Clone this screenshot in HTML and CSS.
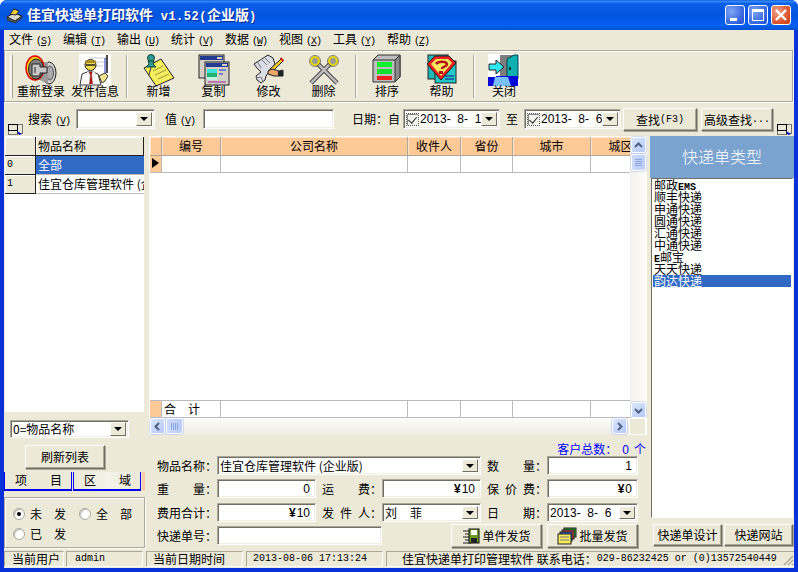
FILE: index.html
```html
<!DOCTYPE html>
<html lang="zh">
<head>
<meta charset="utf-8">
<title>佳宜快递单打印软件</title>
<link rel="stylesheet" href="styles.css">
</head>
<body>
<div class="window">
  <div class="titlebar">
    <svg class="appicon" width="18" height="18" viewBox="0 0 18 18"><path d="M1 11l7-4 8 3-7 5z" fill="#d8d8c8" stroke="#222"/><path d="M4 8l4-5 5 2-3 4z" fill="#f4d13a" stroke="#222"/><path d="M1 11v3l8 3 7-5v-2l-7 5z" fill="#555" stroke="#222" stroke-width=".6"/></svg>
    <div class="title">佳宜快递单打印软件<span class="tm"> v1.52(</span>企业版<span class="tm">)</span></div>
    <div class="winbtns">
      <div class="winbtn"><svg width="20" height="20" viewBox="0 0 20 20"><rect x="5" y="13" width="7" height="3" fill="#fff"/></svg></div>
      <div class="winbtn"><svg width="20" height="20" viewBox="0 0 20 20"><rect x="4.5" y="5.5" width="11" height="10" fill="none" stroke="#fff"/><rect x="4" y="4" width="12" height="3" fill="#fff"/></svg></div>
      <div class="winbtn close"><svg width="20" height="20" viewBox="0 0 20 20"><path d="M5 5l10 10M15 5L5 15" stroke="#fff" stroke-width="2.4"/></svg></div>
    </div>
  </div>
  <div class="frame">
    <div class="menubar">
      <div class="menu">文件<span class="key">(<u>S</u>)</span></div>
      <div class="menu">编辑<span class="key">(<u>T</u>)</span></div>
      <div class="menu">输出<span class="key">(<u>U</u>)</span></div>
      <div class="menu">统计<span class="key">(<u>V</u>)</span></div>
      <div class="menu">数据<span class="key">(<u>W</u>)</span></div>
      <div class="menu">视图<span class="key">(<u>X</u>)</span></div>
      <div class="menu">工具<span class="key">(<u>Y</u>)</span></div>
      <div class="menu">帮助<span class="key">(<u>Z</u>)</span></div>
    </div>
    <div class="toolbar">
      <div class="grip"></div>
      <div class="tool">
        <svg width="32" height="32" viewBox="0 0 32 32"><ellipse cx="24" cy="19" rx="7" ry="11" fill="#d0d0d0" stroke="#222"/><ellipse cx="25" cy="19" rx="3.500" ry="7" fill="#aaa" stroke="#555"/><path d="M11 8l12 0v22L11 24z" fill="#9a9a9a"/><ellipse cx="10" cy="14" rx="9" ry="12" fill="#ffcf00" stroke="#e00000" stroke-width="1.500"/><ellipse cx="11" cy="15" rx="7.500" ry="10" fill="#808080" stroke="#222"/><path d="M7 10h8v3h7v6h-7v3H7z" fill="#c8c8c8" stroke="#222"/><path d="M10 13v6" stroke="#222"/></svg>
        <span>重新登录</span>
      </div>
      <div class="tool">
        <svg width="32" height="32" viewBox="0 0 32 32"><rect width="32" height="32" fill="#fff"/><path d="M11 4h16M13 8h12M15 12h9" stroke="#c8c8c8"/><path d="M28 1v18" stroke="#000" stroke-width="1.4"/><path d="M26 4v16" stroke="#2030c0"/><path d="M1 31l2-11 5-2h6l5 2 3 11z" fill="#fff" stroke="#333"/><path d="M8 18l3 13h2l3-13z" fill="#eee"/><path d="M10 18h3l-.5 3 1 9h-3l1-9z" fill="#c01818" stroke="#600" stroke-width=".4"/><circle cx="11.500" cy="11" r="5.500" fill="#f0dc50" stroke="#222"/><path d="M6 6.500h11V9H6z" fill="#a88a20"/><path d="M7 11h9" stroke="#222" stroke-width="1.400"/><path d="M20 22l6-3 3 3-3 5-3 2z" fill="#f5e58a" stroke="#333"/></svg>
        <span>发件信息</span>
      </div>
      <div class="sep s1"></div>
      <div class="tool w55">
        <svg width="32" height="32" viewBox="0 0 32 32"><path d="M1 14L18 5l13 19-18 8z" fill="#f6ee60" stroke="#222"/><path d="M10 17l10-5M12 21l11-5M15 25l11-5" stroke="#9a9a30"/><path d="M6 21l2-8" stroke="#333"/><circle cx="8" cy="4" r="3.500" fill="#2f9a96" stroke="#143"/><path d="M5 7h6l-1 3 3 3H3l3-3z" fill="#2f9a96" stroke="#143"/></svg>
        <span>新增</span>
      </div>
      <div class="tool w55">
        <svg width="32" height="32" viewBox="0 0 32 32"><rect x="1" y="1" width="25" height="23" fill="#d4d0c8" stroke="#222"/><rect x="2" y="2" width="23" height="4" fill="#223a90"/><rect x="19" y="3" width="5" height="2" fill="#d4d0c8"/><rect x="7" y="8" width="24" height="23" fill="#d4d0c8" stroke="#222"/><rect x="8" y="9" width="22" height="4" fill="#223a90"/><rect x="24" y="10" width="5" height="2" fill="#d4d0c8"/><rect x="9" y="15" width="10" height="4" fill="#40e0d8"/><rect x="9" y="19" width="10" height="4" fill="#20b070"/><rect x="9" y="23" width="10" height="3" fill="#c0f0e0"/><path d="M21 16h7M21 20h4" stroke="#1030c0"/><path d="M10 28h18" stroke="#a020a0"/></svg>
        <span>复制</span>
      </div>
      <div class="tool w55">
        <svg width="32" height="32" viewBox="0 0 32 32"><path d="M1 10L15 1l5 3 2 6-9 12-1 4-4 3-4-3-1-4 5-4-4-4z" fill="#dcdce6" stroke="#222"/><path d="M4 7l4 7M3 24l5-1 2 5M8 5l6 6M11 3l6 6" fill="none" stroke="#777"/><path d="M28 5L17 15l-1 4 4-2L30 7z" fill="#f2c820" stroke="#222"/><path d="M27.500 4l3 3" stroke="#d02020" stroke-width="2"/><path d="M15 17l4-2 7 2 4-1v6h-9l-6-2z" fill="#e8a868" stroke="#222"/><path d="M25 17h5v5h-5z" fill="#222"/></svg>
        <span>修改</span>
      </div>
      <div class="tool w55">
        <svg width="32" height="32" viewBox="0 0 32 32"><path d="M9 9l20 20M23 9L3 29" stroke="#333" stroke-width="4.500"/><path d="M9 9l20 20M23 9L3 29" stroke="#bcbcbc" stroke-width="2.500"/><circle cx="7" cy="7" r="4" fill="#999" stroke="#e8d800" stroke-width="2.200"/><circle cx="25" cy="7" r="4" fill="#999" stroke="#e8d800" stroke-width="2.200"/><circle cx="7" cy="7" r="5.500" fill="none" stroke="#333" stroke-width=".6"/><circle cx="25" cy="7" r="5.500" fill="none" stroke="#333" stroke-width=".6"/></svg>
        <span>删除</span>
      </div>
      <div class="sep s2"></div>
      <div class="tool">
        <svg width="32" height="32" viewBox="0 0 32 32"><path d="M2 6l5-5h22v22l-5 5H2z" fill="#bdbdbd" stroke="#333"/><path d="M24 6l5-5v22l-5 5z" fill="#8a8a8a" stroke="#333"/><path d="M2 6h22" stroke="#333"/><rect x="6" y="8" width="15" height="5" fill="#10f030"/><rect x="6" y="15" width="15" height="5" fill="#10e030"/><rect x="6" y="22" width="15" height="4" fill="#f02020"/></svg>
        <span>排序</span>
      </div>
      <div class="tool w55">
        <svg width="32" height="32" viewBox="0 0 32 32"><rect x="2" y="1" width="20" height="24" fill="#22b8b8" stroke="#222"/><rect x="9" y="7" width="21" height="22" fill="#22c8c8" stroke="#222"/><path d="M19 22h9M19 25h9" stroke="#118"/><path d="M9 2h14l7 7-15 17L1 10z" fill="#e82020" stroke="#222"/><path d="M10 5h12l4 4-11 13L5 10z" fill="#f8e860"/><path d="M10 10c2-3 10-3 11 0 0 3-5 2-5 5" fill="none" stroke="#b01010" stroke-width="2.400"/><rect x="13" y="17" width="4" height="3" fill="#b01010"/></svg>
        <span>帮助</span>
      </div>
      <div class="sep s3"></div>
      <div class="tool">
        <svg width="32" height="32" viewBox="0 0 32 32"><rect width="32" height="32" fill="#fff"/><rect x="12" y="1" width="17" height="24" fill="#7e7e7e"/><path d="M19 24V5l7-4h4v24z" fill="#10b0b0" stroke="#044"/><rect x="21" y="13" width="2" height="3" fill="#033"/><path d="M0 23h8v-1h22v10H0z" fill="#0808d8"/><path d="M7 23h13l3 9H5z" fill="#7ac0f8"/><path d="M1 10h7V6l8 7-8 7v-4H1z" fill="#30e8f0" stroke="#222"/></svg>
        <span>关闭</span>
      </div>
    </div>
    <div class="searchrow">
      <svg class="handle" width="15" height="11" viewBox="0 0 15 11"><rect x=".5" y=".5" width="9" height="6" fill="none" stroke="#000"/><rect x="9.500" y=".5" width="5" height="9" fill="none" stroke="#000" stroke-dasharray="1 1"/><rect x=".5" y="6.500" width="9" height="4" fill="none" stroke="#000" stroke-dasharray="1 1"/><path d="M9 7l5 3-3 1z" fill="#00c"/></svg>
      <div class="lbl slbl">搜索<span class="key">(<u>V</u>)</span></div>
      <div class="combo searchcombo"><div class="val"></div><div class="drop"></div></div>
      <div class="lbl vlbl">值<span class="key">(<u>V</u>)</span></div>
      <div class="field valuefield"></div>
      <div class="lbl dlbl">日期：自</div>
      <div class="combo datecombo"><div class="check"></div><div class="dateval">2013-  8-  1</div><div class="drop"></div></div>
      <div class="lbl tolbl">至</div>
      <div class="combo datecombo"><div class="check"></div><div class="dateval">2013-  8-  6</div><div class="drop"></div></div>
      <div class="btn findbtn">查找<span class="m">(F3)</span></div>
      <div class="btn advbtn">高级查找<span class="m">...</span></div>
      <svg class="handle h2" width="15" height="11" viewBox="0 0 15 11"><rect x=".5" y=".5" width="9" height="6" fill="none" stroke="#000"/><rect x="9.500" y=".5" width="5" height="9" fill="none" stroke="#000" stroke-dasharray="1 1"/><rect x=".5" y="6.500" width="9" height="4" fill="none" stroke="#000" stroke-dasharray="1 1"/><path d="M9 7l5 3-3 1z" fill="#00c"/></svg>
    </div>
    <div class="main">
      <div class="leftcol">
        <div class="lgrid">
          <div class="lrow lhead"><div class="fixed"></div><div class="lcell hcell">物品名称</div></div>
          <div class="lrow"><div class="fixed">0</div><div class="lcell sel">全部</div></div>
          <div class="lrow"><div class="fixed">1</div><div class="lcell">佳宜仓库管理软件 (企业版)</div></div>
        </div>
        <div class="combo fieldcombo"><div class="val">0=物品名称</div><div class="drop"></div></div>
        <div class="btn refresh">刷新列表</div>
        <div class="tabs">
          <div class="tab"><span>项</span><span>目</span></div>
          <div class="tab tab2"><span>区</span><span>域</span></div>
          <div class="tabedge"></div>
        </div>
        <div class="radios">
          <div class="radio"><i class="dot on"></i><span>未发</span></div>
          <div class="radio"><i class="dot"></i><span>全部</span></div>
          <div class="radio"><i class="dot"></i><span>已发</span></div>
        </div>
      </div>
      <div class="centercol">
        <div class="gridbox">
          <div class="gridmain">
            <div class="table">
              <div class="trow thead"><div></div><div>编号</div><div>公司名称</div><div>收件人</div><div>省份</div><div>城市</div><div>城区</div></div>
              <div class="trow tbody"><div class="ind"><i></i></div><div></div><div></div><div></div><div></div><div></div><div></div></div>
              <div class="tspace"></div>
              <div class="trow tfoot"><div class="ind"></div><div class="sum"><span>合</span><span>计</span></div><div></div><div></div><div></div><div></div><div></div></div>
            </div>
            <div class="vscroll">
              <div class="sbtn"><svg width="15" height="15" viewBox="0 0 15 15"><path d="M4 9l3.500-3.500L11 9" fill="none" stroke="#4d6185" stroke-width="2"/></svg></div>
              <div class="sthumb"><svg width="9" height="8" viewBox="0 0 9 8"><path d="M1 .5h7M1 2.500h7M1 4.500h7M1 6.500h7" stroke="#8aa4e0"/></svg></div>
              <div class="sfill"></div>
              <div class="sbtn"><svg width="15" height="15" viewBox="0 0 15 15"><path d="M4 6l3.500 3.500L11 6" fill="none" stroke="#4d6185" stroke-width="2"/></svg></div>
            </div>
          </div>
          <div class="hscroll">
            <div class="sbtn"><svg width="15" height="15" viewBox="0 0 15 15"><path d="M9 4L5.500 7.500 9 11" fill="none" stroke="#4d6185" stroke-width="2"/></svg></div>
            <div class="sthumb"><svg width="8" height="9" viewBox="0 0 8 9"><path d="M.5 1v7M2.500 1v7M4.500 1v7M6.500 1v7" stroke="#8aa4e0"/></svg></div>
            <div class="sfill"></div>
            <div class="sbtn"><svg width="15" height="15" viewBox="0 0 15 15"><path d="M6 4l3.500 3.500L6 11" fill="none" stroke="#4d6185" stroke-width="2"/></svg></div>
            <div class="corner"></div>
          </div>
        </div>
        <div class="summary">客户总数：<span class="count">0</span>个</div>
        <div class="form">
          <div class="flabel">物品名称：</div>
          <div class="combo span3"><div class="val">佳宜仓库管理软件 (企业版)</div><div class="drop"></div></div>
          <div class="flabel lab2"><span class="w2">数</span>量：</div>
          <div class="field num">1</div>

          <div class="flabel"><span class="w2">重</span>量：</div>
          <div class="field num">0</div>
          <div class="flabel lab2"><span class="w2">运</span>费：</div>
          <div class="field num"><b>¥</b>10</div>
          <div class="flabel lab2"><span class="w1">保</span><span class="w1">价</span>费：</div>
          <div class="field num"><b>¥</b>0</div>

          <div class="flabel">费用合计：</div>
          <div class="field num"><b>¥</b>10</div>
          <div class="flabel lab2"><span class="w1">发</span><span class="w1">件</span>人：</div>
          <div class="combo"><div class="val"><span class="w25">刘</span>菲</div><div class="drop"></div></div>
          <div class="flabel lab2"><span class="w2">日</span>期：</div>
          <div class="combo"><div class="dateval">2013-  8-  6</div><div class="drop"></div></div>

          <div class="flabel">快递单号：</div>
          <div class="field span2"></div>
          <div class="sendbtns">
            <div class="btn send">
              <svg width="18" height="18" viewBox="0 0 18 18"><path d="M1 4h6M3 7h5M1 10h6M3 13h5M1 16h8" stroke="#222"/><rect x="7" y="2" width="10" height="14" fill="#6a9a20" stroke="#111"/><rect x="9" y="3" width="6" height="5" fill="#fff"/><rect x="9" y="11" width="6" height="5" fill="#222"/></svg>
              <span>单件发货</span>
            </div>
            <div class="btn send">
              <svg width="20" height="18" viewBox="0 0 20 18"><rect x="7" y="1" width="12" height="9" fill="#20a030" stroke="#222"/><rect x="5" y="3" width="12" height="9" fill="#d04040" stroke="#222"/><rect x="3" y="5" width="12" height="9" fill="#3060d0" stroke="#222"/><rect x="1" y="7" width="13" height="10" fill="#f4ec60" stroke="#222"/><path d="M3 10h9M3 13h9" stroke="#777"/></svg>
              <span>批量发货</span>
            </div>
          </div>
        </div>
      </div>
      <div class="rightcol">
        <div class="rhead">快递单类型</div>
        <div class="rlist">
          <div>邮政<span class="m b">EMS</span></div>
          <div>顺丰快递</div>
          <div>申通快递</div>
          <div>圆通快递</div>
          <div>汇通快递</div>
          <div>中通快递</div>
          <div><span class="m b">E</span>邮宝</div>
          <div>天天快递</div>
          <div class="rsel">韵达快递</div>
        </div>
        <div class="ractions">
          <div class="btn rbtn">快递单设计</div>
          <div class="btn rbtn">快递网站</div>
        </div>
      </div>
    </div>
    <div class="status">
      <div class="scell c1">当前用户</div>
      <div class="scell c2"><span class="m">admin</span></div>
      <div class="scell c3">当前日期时间</div>
      <div class="scell c4"><span class="m">2013-08-06 17:13:24</span></div>
      <div class="scell c5">佳宜快递单打印管理软件 联系电话：<span class="m">029-86232425 or (0)13572540449</span>
        <svg class="sizegrip" width="12" height="12" viewBox="0 0 12 12"><path d="M11 2L2 11M11 6l-5 5M11 10l-1 1" stroke="#aca899" stroke-width="1.300"/></svg>
      </div>
    </div>
  </div>
</div>
</body>
</html>
```
FILE: styles.css
```css
* { box-sizing: border-box; }
html, body { margin: 0; padding: 0; }
body {
  width: 798px; height: 572px; overflow: hidden;
  font-family: "Noto Sans CJK SC", "Liberation Sans", sans-serif;
  font-size: 12px; line-height: 16px; color: #000;
}
.window {
  width: 798px; height: 572px; display: flex; flex-direction: column;
  background: #0831d9;
  border-radius: 7px 7px 0 0; overflow: hidden;
}
.m { font-family: "Liberation Mono", monospace; font-size: 10px; }
.b { font-weight: bold; }
.titlebar {
  height: 30px; flex: none; display: flex; align-items: center;
  padding: 0 7px 0 6px;
  background: linear-gradient(180deg, #0a5ae0 0, #3c8cf8 4%, #0a5fe8 12%, #0454e0 50%, #0660f0 85%, #0350d0 100%);
}
.appicon { flex: none; }
.title {
  margin-left: 3px; font-size: 14px; font-weight: bold; color: #fff;
  white-space: pre; text-shadow: 1px 1px 0 #0a2a90; flex: 1; line-height: 18px;
}
.tm { font-family: "Liberation Mono", monospace; font-size: 12px; letter-spacing: .5px; }
.winbtns { display: flex; gap: 3px; }
.winbtn {
  width: 20px; height: 20px; border: 1px solid #fff; border-radius: 3px;
  background: radial-gradient(circle at 30% 30%, #7ea6f4, #2a5bdc 80%);
  display: flex; overflow: hidden;
}
.winbtn svg { flex: none; margin: -1px; }
.close { background: radial-gradient(circle at 30% 30%, #f0a088, #d6481e 75%); }
.frame {
  flex: 1; margin: 0 4px 4px; background: #ece9d8;
  display: flex; flex-direction: column; min-height: 0;
}
.menubar { height: 20px; flex: none; display: flex; padding-left: 5px; align-items: center; }
.menu { width: 54px; white-space: nowrap; }
.key { font-family: "Liberation Mono", monospace; font-size: 10px; margin-left: 3px; letter-spacing: -1px; }
.key u { text-underline-offset: 1px; }
.toolbar {
  height: 52px; flex: none; width: 789px; display: flex; align-items: stretch;
  border: 1px solid #aca899; box-shadow: inset 1px 1px 0 #fff, 1px 1px 0 #fff;
  padding: 3px 0 0 5px;
}
.grip { width: 3px; margin: 1px 0 3px; border-left: 1px solid #fff; border-right: 1px solid #aca899; background: #ece9d8; }
.tool {
  width: 54px; display: flex; flex-direction: column; align-items: center;
  line-height: 14px; white-space: nowrap;
}
.tool svg { flex: none; }
.tool span { margin-top: -2px; }
.w55 { width: 55px; }
.tool:nth-child(2) { margin-left: 1px; }
.sep { width: 2px; margin: 1px 0 3px; border-left: 1px solid #aca899; border-right: 1px solid #fff; }
.s1 { margin-left: 4px; margin-right: 3px; }
.s2 { margin-left: 4px; margin-right: 3px; }
.s3 { margin-left: 4px; margin-right: 2px; }
.searchrow { height: 34px; flex: none; display: flex; align-items: flex-start; padding-left: 4px; }
.handle { flex: none; margin-top: 22px; }
.h2 { margin-left: 4px; }
.lbl { white-space: nowrap; margin-top: 9px; }
.slbl { margin-left: 5px; width: 48px; }
.vlbl { margin-left: 10px; width: 38px; }
.dlbl { margin-left: 18px; width: 51px; }
.tolbl { margin-left: 6px; width: 18px; }
.field, .combo {
  background: #fff; height: 19px;
  border: 1px solid; border-color: #aca899 #fff #fff #aca899;
  box-shadow: inset 1px 1px 0 #716f64, inset -1px -1px 0 #f1efe2;
}
.combo { display: flex; align-items: stretch; padding: 2px; }
.val { flex: 1; line-height: 14px; white-space: nowrap; }
.drop {
  flex: none; width: 16px; background: #ece9d8; position: relative;
  border: 1px solid; border-color: #fff #716f64 #716f64 #fff;
}
.drop::after {
  content: ""; position: absolute; left: 3px; top: 50%; margin-top: -2px;
  border: 4px solid transparent; border-top: 4px solid #000; border-bottom: 0;
}
.searchcombo { width: 79px; height: 20px; margin-top: 7px; }
.valuefield { width: 131px; height: 20px; margin-top: 7px; }
.datecombo { width: 97px; height: 20px; margin-top: 7px; }
.check {
  flex: none; width: 13px; height: 13px; margin: 1px 1px 0 0;
  border: 1px dotted #555;
  background: #f4f4ee;
  box-shadow: inset 1px 1px 0 #888;
  position: relative;
}
.check::after {
  content: ""; position: absolute; left: 3px; top: 1px; width: 4px; height: 7px;
  border: solid #222; border-width: 0 1px 1px 0; transform: rotate(40deg);
}
.dateval { flex: 1; font-family: "Liberation Sans", sans-serif; font-size: 12px; line-height: 15px; white-space: pre; }
.btn {
  background: #ece9d8; display: flex; align-items: center; justify-content: center;
  border: 1px solid; border-color: #fff #716f64 #716f64 #fff;
  box-shadow: inset -1px -1px 0 #aca899, 1px 1px 0 #aca899;
  white-space: nowrap;
}
.findbtn { width: 74px; height: 23px; margin: 6px 0 0 2px; }
.advbtn { width: 72px; height: 23px; margin: 6px 0 0 4px; }
.main { flex: 1; display: flex; min-height: 0; }
.leftcol { width: 142px; flex: none; display: flex; flex-direction: column; }
.lgrid {
  height: 276px; flex: none; margin: 0 2px 0 1px; background: #fff;
  padding-top: 1px;
}
.lrow { display: flex; height: 19px; }
.fixed {
  width: 31px; flex: none; background: #ece9d8; padding-left: 2px; line-height: 18px;
  border-right: 1px solid #222; border-bottom: 1px solid #222; box-shadow: inset 1px 1px 0 #fff;
  font-family: "Liberation Mono", monospace; font-size: 10px;
}
.lcell { flex: 1; min-width: 0; padding-left: 2px; line-height: 18px; white-space: nowrap; overflow: hidden; border-bottom: 1px solid #bbb; }
.hcell { background: #ece9d8; border-bottom: 1px solid #222; border-right: 1px solid #222; box-shadow: inset 1px 1px 0 #fff; }
.sel { background: #316ac5; color: #fff; }
.fieldcombo { width: 119px; height: 18px; margin: 8px 0 0 6px; padding: 1px 2px; }
.refresh { width: 80px; height: 24px; margin: 7px 0 0 21px; flex: none; }
.tabs { display: flex; height: 19px; margin-top: 3px; flex: none; }
.tab {
  width: 68px; display: flex; justify-content: space-between; padding: 0 9px 0 10px;
  border: 1px solid #0000f0; border-top: 0; border-bottom-width: 2px;
  line-height: 15px; margin-right: 1px;
}
.tab2 { background: linear-gradient(90deg, #ece9d8, #f5f3ea 50%, #ece9d8); }
.tabedge { width: 3px; background: #f8cda5; }
.radios {
  flex: none; height: 51px; margin-top: 6px; width: 141px;
  border: 1px solid #aca899; box-shadow: inset 1px 1px 0 #fff, 1px 1px 0 #fff;
  display: grid; grid-template-columns: 66px 66px; padding: 6px 0 0 8px; grid-auto-rows: 20px;
}
.radio { display: flex; align-items: center; }
.radio span { letter-spacing: 12px; margin-left: 5px; white-space: nowrap; }
.dot {
  display: block; width: 12px; height: 12px; border-radius: 50%; background: #fff; flex: none;
  border: 1px solid #aca899; box-shadow: inset 1px 1px 1px #bbb;
  position: relative;
}
.dot.on::after { content: ""; position: absolute; left: 3px; top: 3px; width: 4px; height: 4px; border-radius: 50%; background: #000; }
.centercol { width: 498px; flex: none; margin: 0 3px; display: flex; flex-direction: column; }
.gridbox { height: 299px; flex: none; display: flex; flex-direction: column; background: #fff; padding: 1px 1px 0 1px; }
.gridmain { flex: 1; display: flex; min-height: 0; }
.table { width: 480px; flex: none; display: flex; flex-direction: column; overflow: hidden; }
.trow { display: grid; grid-template-columns: 12px 59px 187px 53px 52px 78px 60px; width: 501px; flex: none; }
.trow > div { border-right: 1px solid #bbb; }
.thead { height: 19px; }
.thead > div {
  background: #fdc997; text-align: center; line-height: 17px;
  border-right: 1px solid #aca899; border-bottom: 1px solid #aca899; box-shadow: inset 1px 1px 0 #ffe4cb;
}
.tbody { height: 17px; border-bottom: 1px solid #bbb; }
.tfoot { height: 18px; border-top: 1px solid #bbb; border-bottom: 1px solid #bbb; }
.ind { background: #fdc997; padding: 2px 0 0 2px; }
.ind i { display: block; width: 0; height: 0; border: 5px solid transparent; border-left: 7px solid #000; border-right: 0; }
.sum { display: flex; gap: 12px; padding-left: 2px; line-height: 15px; }
.tspace { flex: 1; }
.vscroll { flex: 1; display: flex; flex-direction: column; background: linear-gradient(90deg, #f2f1ea, #fdfdfa); padding: 0 1px; }
.sbtn {
  width: 15px; height: 16px; flex: none; background: linear-gradient(135deg, #dbe6fd, #b3c8f6);
  border: 1px solid #fff; border-radius: 2px; box-shadow: 0 0 0 .5px #a9bce8; display: flex; align-items: center; justify-content: center;
}
.sbtn svg { flex: none; }
.sthumb {
  width: 15px; height: 17px; margin-top: 1px; flex: none; background: linear-gradient(90deg, #cddafb, #bccdf8);
  border: 1px solid #fff; border-radius: 2px; box-shadow: 0 0 0 .5px #a9bce8; display: flex; align-items: center; justify-content: center;
}
.sfill { flex: 1; }
.hscroll { height: 17px; flex: none; display: flex; background: linear-gradient(180deg, #fdfdfa, #ecebe3); }
.hscroll .sthumb { width: 17px; height: 16px; margin: 0 0 0 1px; }
.corner { width: 17px; flex: none; background: #ece9d8; margin-left: 2px; border: 1px solid #fff; }
.summary { height: 13px; margin-top: 7px; flex: none; text-align: right; color: #0000ff; line-height: 13px; padding-right: 1px; white-space: pre; }
.count { font-family: "Liberation Sans", sans-serif; margin: 0 5px; }
.form {
  margin: 1px 0 0 8px; display: grid;
  grid-template-columns: 60px 99px 66px 99px 66px 91px;
  grid-template-rows: 23px 24px 23px 24px; align-items: start;
}
.form > .field, .form > .combo { height: 19px; }
.flabel { white-space: nowrap; line-height: 19px; }
.lab2 { padding-left: 6px; }
.w2 { display: inline-block; width: 36px; }
.w1 { display: inline-block; width: 18px; }
.w25 { display: inline-block; width: 25px; }
.span3 { grid-column: span 3; }
.span2 { grid-column: span 2; }
.num { text-align: right; padding: 1px 5px 0 0; line-height: 16px; font-family: "Liberation Sans", sans-serif; }
.num b { margin-right: 1px; }
.sendbtns { grid-column: span 3; display: flex; gap: 5px; justify-content: flex-end; margin-top: -2px; }
.send { width: 91px; height: 24px; gap: 2px; }
.send svg { flex: none; }
.rightcol { width: 144px; flex: none; display: flex; flex-direction: column; }
.rhead { height: 42px; flex: none; background: #7aa3d0; color: #fff; font-size: 16px; text-align: center; line-height: 41px; font-weight: 300; }
.rlist {
  height: 340px; flex: none; margin: 0 1px; background: #fff; padding: 0 1px;
  border: 1px solid; border-color: #716f64 #fff #fff #716f64; line-height: 12px;
}
.rlist > div { height: 12px; padding-left: 1px; white-space: nowrap; }
.rsel { background: #316ac5; color: #fff; }
.ractions { display: flex; gap: 2px; margin: 6px 0 0 3px; }
.rbtn { width: 69px; height: 22px; }
.status { height: 18px; flex: none; display: flex; padding: 1px 0; }
.scell {
  display: flex; align-items: center; white-space: pre; line-height: 14px;
  border: 1px solid; border-color: #aca899 #fff #fff #aca899; margin-right: 2px;
}
.c1 { width: 60px; padding-left: 7px; }
.c2 { width: 77px; padding-left: 8px; margin-right: 3px; }
.c3 { width: 97px; padding-left: 6px; margin-right: 3px; }
.c4 { width: 137px; padding-left: 6px; margin-right: 3px; }
.c5 { flex: 1; margin-right: 0; padding-left: 15px; border-right: 0; }
.sizegrip { flex: none; margin-left: auto; align-self: flex-end; }
```
